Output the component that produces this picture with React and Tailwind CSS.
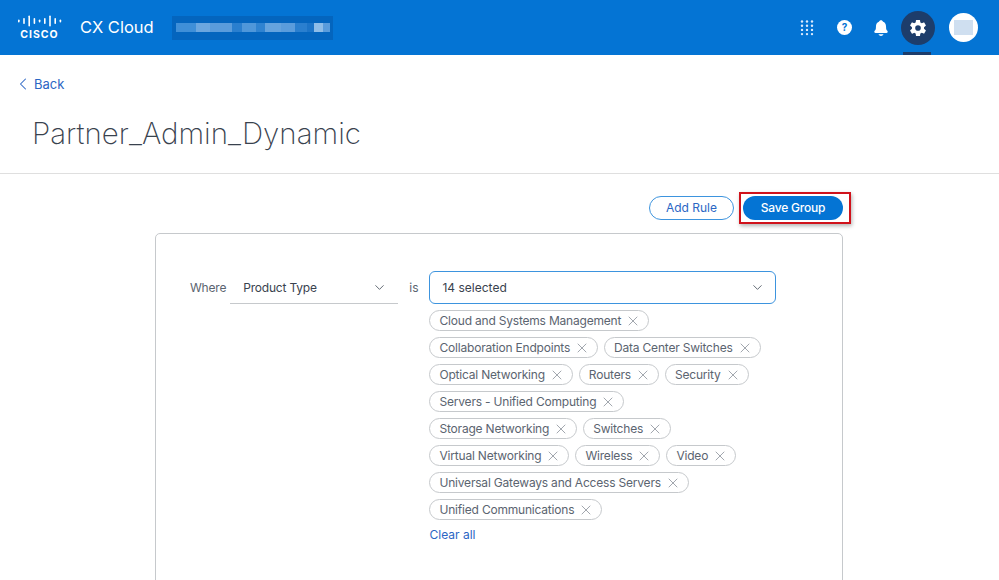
import React from 'react';
import { ChevronLeft, ChevronDown, X } from 'lucide-react';
import { IoNotifications, IoSettingsSharp } from 'react-icons/io5';

const chipRows = [
  ['Cloud and Systems Management'],
  ['Collaboration Endpoints', 'Data Center Switches'],
  ['Optical Networking', 'Routers', 'Security'],
  ['Servers - Unified Computing'],
  ['Storage Networking', 'Switches'],
  ['Virtual Networking', 'Wireless', 'Video'],
  ['Universal Gateways and Access Servers'],
  ['Unified Communications'],
];

const blurBlocks = [
  ['w-[20px]', 'bg-[#3f8fd8]'],
  ['w-[14px]', 'bg-[#6ba6df]'],
  ['w-[22px]', 'bg-[#5a9cdc]'],
  ['w-[10px]', 'bg-[#2a7fcf]'],
  ['w-[14px]', 'bg-[#4f97da]'],
  ['w-[9px]', 'bg-[#2f83d1]'],
  ['w-[16px]', 'bg-[#65a3de]'],
  ['w-[14px]', 'bg-[#5a9cdc]'],
  ['w-[12px]', 'bg-[#2a7fcf]'],
  ['w-[7px]', 'bg-[#1c74c8]'],
  ['w-[9px]', 'bg-[#8fbde8]'],
  ['w-[7px]', 'bg-[#5a9cdc]'],
];

function CiscoLogo() {
  const bars = [3, 6, 11, 6, 3, 6, 11, 6, 3];
  return (
    <div className="flex flex-col items-center w-[45px]">
      <svg width="45" height="12" viewBox="0 0 45 12">
        {bars.map((h, i) => (
          <rect key={i} x={1 + i * 5.2} y={6 - h / 2} width="1.6" height={h} rx="0.8" fill="#fff" />
        ))}
      </svg>
      <span className="mt-[3px] text-[10.5px] leading-[10px] font-bold text-white tracking-[1px]">CISCO</span>
    </div>
  );
}

function AppGrid() {
  const dots = [];
  for (let r = 0; r < 4; r++) {
    for (let c = 0; c < 3; c++) {
      dots.push(<circle key={`${r}-${c}`} cx={2 + c * 5} cy={1.5 + r * 4.2} r="1.2" fill="#dbeafe" />);
    }
  }
  return (
    <svg width="14" height="16" viewBox="0 0 14 16">
      {dots}
    </svg>
  );
}

function Chip({ label }) {
  return (
    <span className="h-[21px] flex items-center gap-[4px] pl-[9px] pr-[7px] border border-[#c6c9cc] rounded-full text-[12px] tracking-[-0.2px] text-[#5b6470]">
      {label}
      <X size={16} strokeWidth={1.25} className="text-[#8f959d]" />
    </span>
  );
}

export default function App() {
  return (
    <div className="w-full h-[580px] overflow-hidden bg-white text-[#39424e] font-['Inter',sans-serif]">
      <header className="h-[55px] bg-[#0474d4] flex items-center pl-[17px] pr-[21px]">
        <CiscoLogo />
        <span className="ml-[18px] text-[16.5px] text-white">CX Cloud</span>
        {/* blurred org name */}
        <div className="ml-[18px] w-[161px] h-[24px] bg-[#0465be] flex items-center pl-[4px] pb-[1px]">
          <div className="flex h-[9px] blur-[0.6px]">
            {blurBlocks.map(([w, bg], i) => (
              <div key={i} className={`${w} ${bg}`}></div>
            ))}
          </div>
        </div>
        <div className="ml-auto flex items-center">
          <AppGrid />
          <div className="ml-[23px] w-[15px] h-[15px] rounded-full bg-white flex items-center justify-center text-[10px] font-bold text-[#0474d4]">?</div>
          <IoNotifications size={18} className="ml-[20px] text-white" />
          <div className="relative ml-[11px] w-[34px] h-[34px] rounded-full bg-[#1d3d6b] flex items-center justify-center">
            <IoSettingsSharp size={18} className="text-white" />
            <div className="absolute left-[2px] top-[41px] w-[28px] h-[3px] bg-[#1d3d6b]"></div>
          </div>
          <div className="ml-[14px] w-[29px] h-[29px] rounded-full bg-white flex items-center justify-center">
            <div className="w-[19px] h-[15px] bg-[#cfdff0]"></div>
          </div>
        </div>
      </header>

      <div className="h-[119px] border-b border-[#dfdfdf] pl-[19px]">
        <a className="pt-[19px] flex items-center gap-[1px] text-[13px] leading-[18px] text-[#2b66c4]">
          <ChevronLeft size={20} strokeWidth={1.25} className="-ml-[6px]" />
          Back
        </a>
        <h1 className="mt-[19px] ml-[13px] text-[29.5px] leading-[40px] font-extralight text-[#39424e]">Partner_Admin_Dynamic</h1>
      </div>

      <div className="flex justify-end gap-[9px] pr-[156px] pt-[22px]">
        <button className="w-[85px] h-[24px] rounded-full border border-[#3d94de] text-[12px] text-[#2b66c4]">Add Rule</button>
        <div className="relative">
          <button className="block w-[100px] h-[24px] rounded-full bg-[#0474d4] text-[12px] tracking-[-0.2px] font-medium text-white">Save Group</button>
          <div className="absolute -left-[4px] -top-[4px] w-[112px] h-[32px] border-2 border-[#d0121b] shadow-[1px_2px_4px_rgba(0,0,0,0.3)]"></div>
        </div>
      </div>

      <div className="mt-[13px] ml-[155px] w-[688px] h-[400px] border border-[#c6c9cc] rounded-t-[5px] pt-[37px] pl-[34px] flex items-start">
        <span className="mt-[8px] text-[12px] tracking-[-0.2px] text-[#5b6470]">Where</span>
        <div className="ml-[4px] w-[168px] h-[33px] border-b border-[#c6c9cc] flex items-center justify-between pt-[1px] pl-[13px] pr-[11px] text-[12px] tracking-[-0.2px]">
          Product Type
          <ChevronDown size={15} strokeWidth={1.25} />
        </div>
        <span className="ml-[11px] mt-[8px] text-[12px] text-[#5b6470]">is</span>
        <div className="ml-[11px] flex flex-col items-start">
          <div className="w-[347px] h-[33px] border border-[#3d94de] rounded-[6px] flex items-center justify-between pl-[12px] pr-[10px] text-[12px]">
            14 selected
            <ChevronDown size={15} strokeWidth={1.25} />
          </div>
          <div className="mt-[6px] flex flex-col gap-[6px]">
            {chipRows.map((row, i) => (
              <div key={i} className="flex gap-[6px]">
                {row.map((c) => <Chip key={c} label={c} />)}
              </div>
            ))}
          </div>
          <a className="mt-[6px] text-[12px] text-[#2b66c4]">Clear all</a>
        </div>
      </div>
    </div>
  );
}
